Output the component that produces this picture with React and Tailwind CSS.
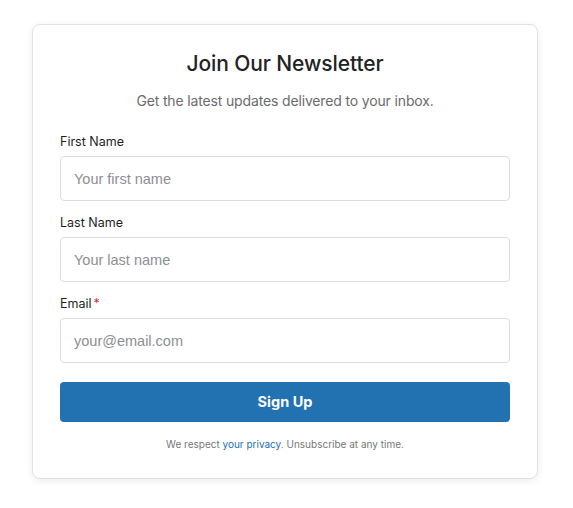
export default function App() {
  const fields = [
    { id: 'first', label: 'First Name', placeholder: 'Your first name', type: 'text' },
    { id: 'last', label: 'Last Name', placeholder: 'Your last name', type: 'text' },
    { id: 'email', label: 'Email', placeholder: 'your@email.com', type: 'email', required: true },
  ];

  return (
    <div className="min-h-screen bg-white pt-6 font-['Inter',sans-serif]">
      <div className="ml-8 w-[506px] rounded-lg border border-[#e2e2e2] bg-white px-[27px] pt-[23px] pb-[26px] shadow-[0_2px_8px_rgba(0,0,0,0.07)]">
        <h2 className="text-center text-[21px] font-medium leading-8 tracking-[-0.1px] text-[#222]">
          Join Our Newsletter
        </h2>
        <p className="mt-[9px] text-center text-[14px] leading-6 tracking-[-0.15px] text-[#6b6b6b]">
          Get the latest updates delivered to your inbox.
        </p>

        <form className="mt-[19px] flex flex-col gap-3" onSubmit={(e) => e.preventDefault()}>
          {fields.map((f) => (
            <div key={f.id}>
              <label htmlFor={f.id} className="mb-1 block text-[12.5px] leading-5 text-[#1e1e1e]">
                {f.label}
                {f.required && <span className="ml-0.5 text-[#d63638]">*</span>}
              </label>
              <input
                id={f.id}
                type={f.type}
                placeholder={f.placeholder}
                className="block h-[45px] w-full rounded border border-[#dcdcde] px-[13px] font-['Liberation_Sans',Arial,sans-serif] text-[14.5px] text-[#1e1e1e] placeholder:text-[#8c8f94] focus:outline-none"
              />
            </div>
          ))}

          <button
            type="submit"
            className="mt-[7px] h-10 w-full rounded bg-[#2271b1] text-[14.5px] font-bold text-white"
          >
            Sign Up
          </button>
        </form>

        <p className="mt-[14px] text-center text-[10px] leading-4 text-[#777]">
          We respect <a href="#" className="text-[#2271b1]">your privacy</a>. Unsubscribe at any time.
        </p>
      </div>
    </div>
  );
}
